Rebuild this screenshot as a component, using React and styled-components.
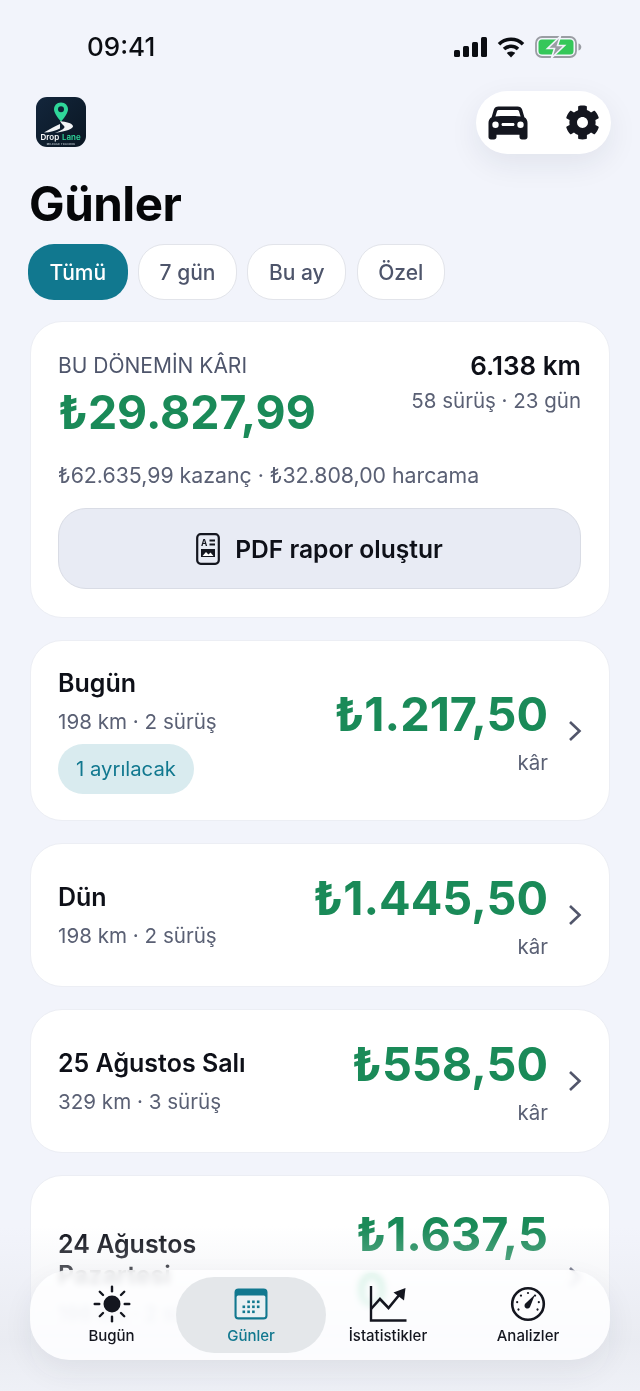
import React from 'react'
import styled, { createGlobalStyle } from 'styled-components'
import { FaCog } from 'react-icons/fa'

const GlobalStyle = createGlobalStyle`
    * { box-sizing: border-box; }
    html, body { margin: 0; padding: 0; background: #f2f4fb; }
    body { font-family: "Inter", "Noto Sans", sans-serif; }
`

const days = [
    { title: 'Bugün', meta: '198 km · 2 sürüş', amount: '₺1.217,50', badge: '1 ayrılacak', height: 181 },
    { title: 'Dün', meta: '198 km · 2 sürüş', amount: '₺1.445,50', height: 144 },
    { title: '25 Ağustos Salı', meta: '329 km · 3 sürüş', amount: '₺558,50', height: 144 },
    { title: '24 Ağustos Pazartesi', meta: '198 km · 2 sürüş', amount: '₺1.637,50', height: 204, narrow: true },
]

function Signal() {
    return (
        <svg width="34" height="20" viewBox="0 0 34 20" fill="#0b0d12">
            <rect x="1" y="13" width="6" height="7" rx="1.5" />
            <rect x="10" y="9" width="6" height="11" rx="1.5" />
            <rect x="19" y="5" width="6" height="15" rx="1.5" />
            <rect x="28" y="0" width="6" height="20" rx="1.5" />
        </svg>
    )
}

function Wifi() {
    return (
        <svg width="28" height="22" viewBox="0 0 28 22" fill="none" stroke="#0b0d12" strokeWidth="3.6">
            <path d="M2 8.2 C8.8 1.6 19.2 1.6 26 8.2" />
            <path d="M7 13 C11 9.4 17 9.4 21 13" />
            <path d="M14 21.5 L9.8 17 C12 15 16 15 18.2 17 Z" fill="#0b0d12" stroke="none" />
        </svg>
    )
}

function Battery() {
    return (
        <svg width="47" height="24" viewBox="0 0 47 24">
            <rect x="1" y="2" width="40" height="20" rx="6" fill="none" stroke="#9a9da3" strokeWidth="1.8" />
            <rect x="3.5" y="4.5" width="35" height="15" rx="3.5" fill="#35c759" />
            <path d="M43.5 8.5 C45.5 9 46.3 10.5 46.3 12 C46.3 13.5 45.5 15 43.5 15.5 Z" fill="#9a9da3" />
            <path d="M25.5 1 L12.5 13.5 H19.5 L16.5 23 L29.5 10.5 H22.5 Z" fill="#9a9da3" stroke="#f2f4fb" strokeWidth="1.6" />
        </svg>
    )
}

function Logo() {
    return (
        <svg width="50" height="50" viewBox="0 0 50 50">
            <defs>
                <linearGradient id="logoBg" x1="0" y1="0" x2="1" y2="1">
                    <stop offset="0" stopColor="#13263c" />
                    <stop offset="1" stopColor="#0a1622" />
                </linearGradient>
            </defs>
            <rect width="50" height="50" rx="11" fill="url(#logoBg)" />
            <path d="M25 5.5 C20.6 5.5 18 8.8 18 12.4 C18 17 25 24.5 25 24.5 C25 24.5 32 17 32 12.4 C32 8.8 29.4 5.5 25 5.5 Z" fill="#2fd79a" />
            <circle cx="25" cy="12.3" r="3" fill="#0f2236" />
            <path d="M24 24 C30 25 36 26 37 29 C37.5 32 30 34 19 36 C26 33 30 31 28 29 C27 28 25 26 24 24 Z" fill="#f2f4f6" />
            <path d="M24 27 C19 29 14 32 8 35.5 C14 35.5 20 33.5 24 31.5 Z" fill="#f2f4f6" />
            <text x="4.5" y="43" fontFamily="Inter, sans-serif" fontSize="8" fontWeight="600" fill="#ffffff">Drop</text>
            <text x="26" y="43" fontFamily="Inter, sans-serif" fontSize="8" fontWeight="600" fill="#2fd79a">Lane</text>
            <text x="25" y="47.5" textAnchor="middle" fontFamily="Inter, sans-serif" fontSize="2.4" fontWeight="700" letterSpacing="0.4" fill="#b9c3cc">MILEAGE TRACKER</text>
        </svg>
    )
}

function Car() {
    return (
        <svg width="40" height="34" viewBox="0 0 40 34" fill="#14161f">
            <path fillRule="evenodd" d="M10.5 0.5 H29.5 C32 0.5 33.4 1.6 34.2 3.8 L36.4 11.3 C38.6 12.6 39.5 14.5 39.5 17 V31 C39.5 32.6 38.5 33.5 37 33.5 H34 C32.5 33.5 31.5 32.6 31.5 31 V28.8 H8.5 V31 C8.5 32.6 7.5 33.5 6 33.5 H3 C1.5 33.5 0.5 32.6 0.5 31 V17 C0.5 14.5 1.4 12.6 3.6 11.3 L5.8 3.8 C6.6 1.6 8 0.5 10.5 0.5 Z M10.6 4 C9.8 4 9.3 4.4 9 5.2 L7.4 10.4 C13 9.8 27 9.8 32.6 10.4 L31 5.2 C30.7 4.4 30.2 4 29.4 4 Z M7.5 15.5 A3.2 3.2 0 1 0 7.5 21.9 A3.2 3.2 0 1 0 7.5 15.5 Z M32.5 15.5 A3.2 3.2 0 1 0 32.5 21.9 A3.2 3.2 0 1 0 32.5 15.5 Z M15 17 C14 17 13.5 17.6 13.5 18.5 C13.5 19.4 14 20 15 20 H25 C26 20 26.5 19.4 26.5 18.5 C26.5 17.6 26 17 25 17 Z" />
        </svg>
    )
}

function ReportIcon() {
    return (
        <svg width="24" height="32" viewBox="0 0 24 32" fill="none">
            <rect x="1.2" y="1.2" width="21.6" height="29.6" rx="3.5" stroke="#14161f" strokeWidth="2.2" />
            <text x="5" y="13" fontFamily="Inter, sans-serif" fontSize="8.5" fontWeight="700" fill="#14161f">A</text>
            <path d="M13.5 7.5 H19 M13.5 11.5 H19" stroke="#14161f" strokeWidth="1.8" />
            <path d="M5 16 H19 V24 H5 Z" fill="#14161f" />
            <path d="M6.5 23 L10 19 L12.5 21.5 L14.5 19.5 L17.5 23 Z" fill="#ffffff" />
        </svg>
    )
}

function Sun() {
    const rays = [0, 45, 90, 135, 180, 225, 270, 315]
    return (
        <svg width="38" height="38" viewBox="0 0 38 38">
            <circle cx="19" cy="19" r="8.5" fill="#14161f" />
            {rays.map((r) => (
                <rect key={r} x="17.8" y="0.5" width="2.4" height="7" rx="1.2" fill="#14161f" transform={`rotate(${r} 19 19)`} />
            ))}
        </svg>
    )
}

function Calendar() {
    const cells = []
    for (let row = 0; row < 3; row++) {
        for (let col = 0; col < 4; col++) {
            if (row === 0 && col === 0) continue
            if (row === 2 && col === 3) continue
            cells.push(<rect key={`${row}-${col}`} x={8.5 + col * 4.8} y={12.5 + row * 5} width="2.6" height="2.6" fill="#11788f" />)
        }
    }
    return (
        <svg width="34" height="32" viewBox="0 0 34 32">
            <rect x="0.5" y="0.5" width="33" height="31" rx="4" fill="#11788f" />
            <rect x="2.6" y="7.5" width="28.8" height="21.8" rx="1.5" fill="#e9f0f3" />
            {cells}
        </svg>
    )
}

function Chart() {
    return (
        <svg width="38" height="36" viewBox="0 0 38 36" fill="none" stroke="#14161f">
            <path d="M2 0 V34.5 H37.5" strokeWidth="2.4" />
            <path d="M2 23 L11 13 L19.5 22 L31 8" strokeWidth="2.6" />
            <path d="M24.5 6.5 L36.5 2 L35 14.5 Z" fill="#14161f" stroke="none" />
        </svg>
    )
}

function Gauge() {
    const ticks = [-120, -80, -40, 0, 40, 80, 120]
    return (
        <svg width="36" height="36" viewBox="0 0 36 36">
            <circle cx="18" cy="18" r="15.8" fill="none" stroke="#14161f" strokeWidth="2.6" />
            {ticks.map((t) => (
                <circle key={t} cx="18" cy="7" r="1.1" fill="#14161f" transform={`rotate(${t} 18 18)`} />
            ))}
            <path d="M25 8.5 L20 21 A2.9 2.9 0 1 1 15.4 17.6 Z" fill="#14161f" />
        </svg>
    )
}

function App() {
    return (
        <Screen>
            <GlobalStyle />
            <StatusBar>
                <Clock>09:41</Clock>
                <StatusIcons>
                    <Signal />
                    <Wifi />
                    <Battery />
                </StatusIcons>
            </StatusBar>

            <Header>
                <LogoSlot><Logo /></LogoSlot>
                <ActionPill>
                    <Car />
                    <FaCog size={35} color="#14161f" />
                </ActionPill>
            </Header>

            <Title>Günler</Title>

            <Chips>
                <Chip $active>Tümü</Chip>
                <Chip>7 gün</Chip>
                <Chip>Bu ay</Chip>
                <Chip>Özel</Chip>
            </Chips>

            <Cards>
                <SummaryCard>
                    <SummaryTop>
                        <div>
                            <SummaryLabel>BU DÖNEMİN KÂRI</SummaryLabel>
                            <SummaryAmount>₺29.827,99</SummaryAmount>
                        </div>
                        <SummaryRight>
                            <Distance>6.138 km</Distance>
                            <Meta>58 sürüş · 23 gün</Meta>
                        </SummaryRight>
                    </SummaryTop>
                    <Breakdown>₺62.635,99 kazanç · ₺32.808,00 harcama</Breakdown>
                    <PdfButton>
                        <ReportIcon />
                        PDF rapor oluştur
                    </PdfButton>
                </SummaryCard>

                {days.map((day) => (
                    <DayCard key={day.title} $height={day.height}>
                        <DayInfo $narrow={day.narrow} $badge={day.badge}>
                            <DayTitle>{day.title}</DayTitle>
                            <DayMeta>{day.meta}</DayMeta>
                            {day.badge && <Badge>{day.badge}</Badge>}
                        </DayInfo>
                        <DayAmount $narrow={day.narrow}>
                            <Amount $narrow={day.narrow}>{day.amount}</Amount>
                            <Kar>kâr</Kar>
                        </DayAmount>
                        <Chevron width="14" height="22" viewBox="0 0 14 22" fill="none" stroke="#52566b" strokeWidth="2.6">
                            <path d="M2 2 L11.5 11 L2 20" />
                        </Chevron>
                    </DayCard>
                ))}
            </Cards>

            <BottomFade />

            <TabBar>
                <Tab $offset={10}>
                    <TabIcon><Sun /></TabIcon>
                    Bugün
                </Tab>
                <Tab $active>
                    <TabIcon><Calendar /></TabIcon>
                    Günler
                </Tab>
                <Tab>
                    <TabIcon><Chart /></TabIcon>
                    İstatistikler
                </Tab>
                <Tab $offset={3}>
                    <TabIcon><Gauge /></TabIcon>
                    Analizler
                </Tab>
            </TabBar>
        </Screen>
    )
}

const Screen = styled.div`
    position: relative;
    width: 640px;
    height: 1391px;
    overflow: hidden;
    background-color: #f2f4fb;
`

const StatusBar = styled.div`
    height: 91px;
    padding: 31px 58px 0 87px;
    display: flex;
    justify-content: space-between;
    align-items: flex-start;
`

const Clock = styled.div`
    font-size: 26px;
    line-height: 32px;
    font-weight: 500;
    color: #0b0d12;
`

const StatusIcons = styled.div`
    display: flex;
    align-items: center;
    gap: 10px;
    height: 32px;
`

const Header = styled.div`
    height: 63px;
    padding: 0 29px 0 36px;
    display: flex;
    justify-content: space-between;
    align-items: flex-start;
`

const LogoSlot = styled.div`
    margin-top: 6px;
    line-height: 0;
`

const ActionPill = styled.div`
    width: 135px;
    height: 63px;
    padding: 0 11px 0 12px;
    display: flex;
    justify-content: space-between;
    align-items: center;
    background-color: #ffffff;
    border-radius: 32px;
    box-shadow: 0 10px 30px rgba(30, 40, 70, 0.08);
`

const Title = styled.h1`
    margin: 22px 0 0 29px;
    font-size: 47.5px;
    line-height: 56px;
    font-weight: 700;
    letter-spacing: -0.5px;
    color: #050608;
`

const Chips = styled.div`
    display: flex;
    gap: 10.5px;
    margin: 12px 0 0 28px;
`

const Chip = styled.div`
    height: 56px;
    padding: 0 ${props => (props.$active ? '21.5px' : '20.5px')};
    display: flex;
    align-items: center;
    border-radius: 26px;
    font-size: 21px;
    font-weight: 500;
    color: ${props => (props.$active ? '#ffffff' : '#4e556b')};
    background-color: ${props => (props.$active ? '#11788f' : '#ffffff')};
    border: ${props => (props.$active ? 'none' : '1.5px solid #e2e4ea')};
`

const Cards = styled.div`
    display: flex;
    flex-direction: column;
    gap: 22px;
    margin: 21px 30px 0;
`

const SummaryCard = styled.div`
    height: 297px;
    padding: 28px 28px 0 27px;
    background-color: #ffffff;
    border: 1px solid #eceef4;
    border-radius: 32px;
`

const SummaryTop = styled.div`
    display: flex;
    justify-content: space-between;
    align-items: flex-start;
`

const SummaryLabel = styled.div`
    font-size: 21px;
    line-height: 32px;
    color: #4e556b;
`

const SummaryAmount = styled.div`
    margin-top: 2px;
    font-size: 46.4px;
    line-height: 56px;
    font-weight: 700;
    color: #1a8a58;
`

const SummaryRight = styled.div`
    text-align: right;
`

const Distance = styled.div`
    font-size: 26px;
    line-height: 32px;
    font-weight: 600;
    color: #0e1018;
`

const Meta = styled.div`
    margin-top: 5px;
    font-size: 20.5px;
    line-height: 28px;
    color: #5a6074;
`

const Breakdown = styled.div`
    margin-top: 21px;
    font-size: 21.3px;
    line-height: 28px;
    color: #5a6074;
`

const PdfButton = styled.div`
    height: 81px;
    margin-top: 19px;
    display: flex;
    align-items: center;
    justify-content: center;
    gap: 15px;
    background-color: #e8ebf4;
    border: 1px solid #d9dce5;
    border-radius: 28px;
    font-size: 24.6px;
    font-weight: 600;
    color: #0e1018;
`

const DayCard = styled.div`
    flex: none;
    height: ${props => props.$height}px;
    padding: 0 27px;
    display: flex;
    align-items: center;
    background-color: #ffffff;
    border: 1px solid #eceef4;
    border-radius: 32px;
`

const DayInfo = styled.div`
    flex: ${props => (props.$narrow ? 'none' : '1')};
    min-width: 0;
    width: ${props => (props.$narrow ? '190px' : 'auto')};
    margin-right: ${props => (props.$narrow ? 'auto' : '0')};
    padding-top: ${props => (props.$badge ? '0' : '2px')};
`

const DayTitle = styled.div`
    font-size: 25px;
    line-height: 31px;
    font-weight: 600;
    color: #0e1018;
`

const DayMeta = styled.div`
    margin-top: 9px;
    font-size: 20.6px;
    line-height: 28px;
    color: #5a6074;
`

const Badge = styled.div`
    display: inline-block;
    height: 50px;
    margin-top: 8px;
    padding: 0 18px;
    line-height: 50px;
    border-radius: 25px;
    font-size: 20.3px;
    color: #11788f;
    background-color: #d9ebef;
`

const DayAmount = styled.div`
    display: flex;
    flex-direction: column;
    align-items: flex-end;
    padding-top: ${props => (props.$narrow ? '5px' : '2px')};
`

const Amount = styled.div`
    width: ${props => (props.$narrow ? '192px' : 'auto')};
    word-break: break-all;
    font-size: 46.8px;
    line-height: ${props => (props.$narrow ? '56px' : '53px')};
    font-weight: 700;
    color: #1a8a58;
`

const Kar = styled.div`
    margin-top: 9px;
    font-size: 20.5px;
    line-height: 26px;
    color: #5a6074;
`

const Chevron = styled.svg`
    flex: none;
    margin-left: 20px;
`

const BottomFade = styled.div`
    position: absolute;
    left: 0;
    right: 0;
    bottom: 0;
    height: 165px;
    background: linear-gradient(to bottom, rgba(242, 244, 251, 0), rgba(232, 234, 240, 0.85) 70%, rgba(238, 240, 246, 0.9));
`

const TabBar = styled.div`
    position: absolute;
    left: 30px;
    top: 1270px;
    width: 580px;
    height: 90px;
    padding: 7px;
    display: grid;
    grid-template-columns: 139px 150px 124px 153px;
    background-color: rgba(255, 255, 255, 0.82);
    backdrop-filter: blur(3px) saturate(1.8);
    border-radius: 40px;
    box-shadow: 0 12px 30px rgba(30, 40, 70, 0.07);
`

const Tab = styled.div`
    display: flex;
    flex-direction: column;
    align-items: center;
    justify-content: flex-end;
    padding: 0 0 8px ${props => props.$offset || 0}px;
    border-radius: 38px;
    white-space: nowrap;
    font-size: 15px;
    line-height: 18px;
    font-weight: 500;
    color: ${props => (props.$active ? '#11788f' : '#14161f')};
    background-color: ${props => (props.$active ? 'rgba(225, 228, 232, 0.9)' : 'transparent')};
`

const TabIcon = styled.div`
    height: 38px;
    margin-bottom: 4px;
    display: flex;
    align-items: center;
    justify-content: center;
`

export default App
